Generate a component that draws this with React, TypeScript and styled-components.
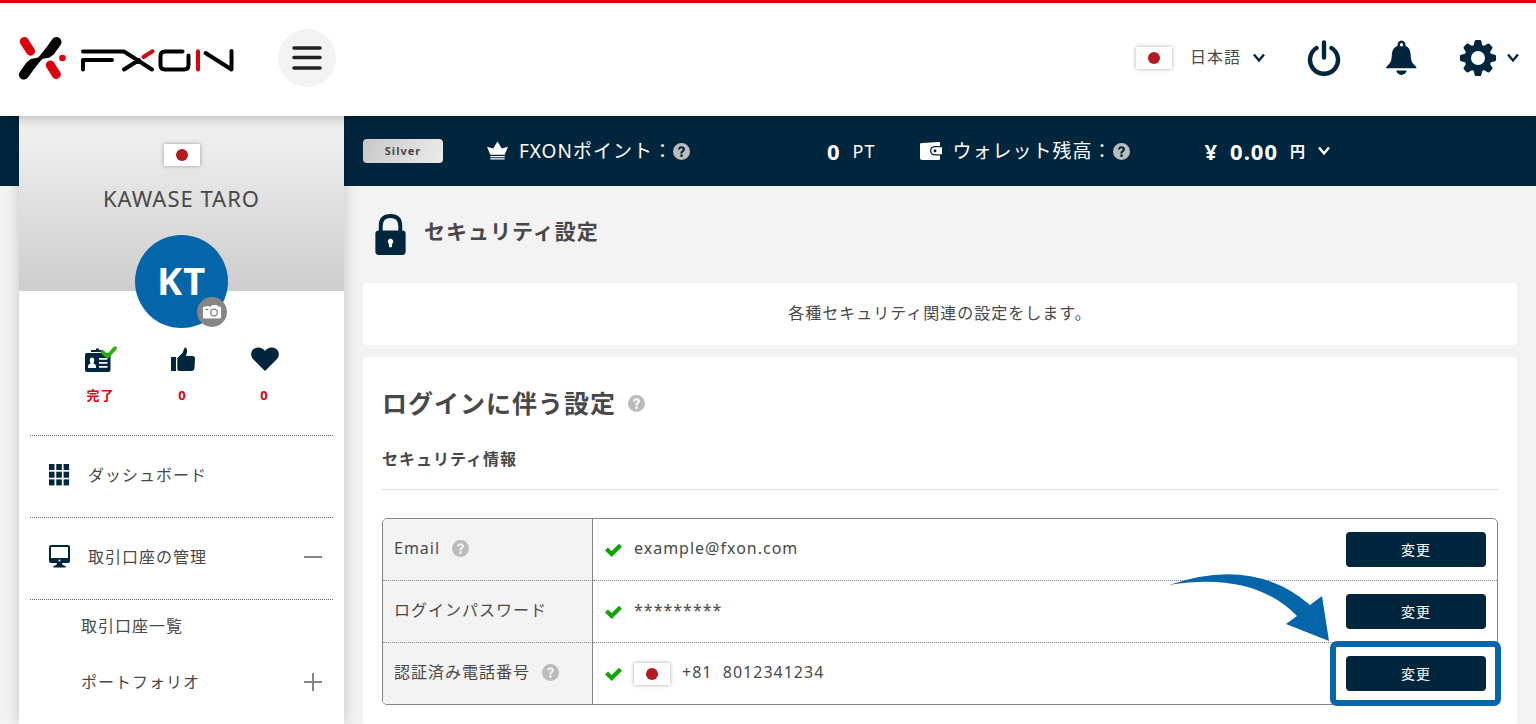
import React from "react";
import styled, { createGlobalStyle, css } from "styled-components";

const navy = "#00263e";
const red = "#dc000f";
const blue = "#0565a9";
const green = "#0ca500";

const GlobalStyle = createGlobalStyle`
  *, *::before, *::after { box-sizing: border-box; }
  body {
    margin: 0;
    background: #f3f3f3;
    color: #484848;
    font: 16px/24px "Noto Sans", "Noto Sans CJK JP", sans-serif;
    letter-spacing: 1px;
  }
  button { font: inherit; letter-spacing: inherit; color: inherit; background: none; border: 0; padding: 0; cursor: pointer; }
  a { color: inherit; text-decoration: none; }
  h1, h2, h3, p, ul { margin: 0; padding: 0; list-style: none; }
  svg { display: block; flex: none; }
`;

const Page = styled.div`
  min-height: 100vh;
  overflow-x: hidden;
`;

const Header = styled.header`
  position: relative;
  z-index: 2;
  display: flex;
  align-items: center;
  height: 116px;
  padding: 0 17px 4px 18px;
  border-top: 3px solid ${red};
  background: #fff;
  box-shadow: 0 2px 12px rgba(0, 0, 0, 0.25);
`;

const MenuButton = styled.button`
  display: grid;
  place-items: center;
  width: 58px;
  height: 58px;
  margin-left: 43px;
  border-radius: 50%;
  background: #f3f3f3;
`;

const HeaderActions = styled.div`
  display: flex;
  align-items: center;
  margin-left: auto;
`;

const HeaderButton = styled.button<{ $before?: number; $gap?: number }>`
  display: flex;
  align-items: center;
  gap: ${(p) => p.$gap ?? 0}px;
  margin-left: ${(p) => p.$before ?? 0}px;
  color: ${navy};
`;

const LanguageName = styled.span`
  margin-left: 6px;
  padding-bottom: 2px;
  color: #484848;
`;

const FlagBox = styled.span`
  display: grid;
  place-items: center;
  flex: none;
  width: 36px;
  height: 22px;
  background: #fff;
  box-shadow: 0 0 4px rgba(0, 0, 0, 0.35);

  &::after {
    content: "";
    width: 12px;
    height: 12px;
    border-radius: 50%;
    background: #b31b22;
  }
`;

const Body = styled.div`
  display: flex;
  min-height: calc(100vh - 116px);
  padding-left: 19px;
  background: linear-gradient(${navy} 70px, #f3f3f3 70px);
`;

const Sidebar = styled.aside`
  flex: none;
  width: 325px;
  background: #fff;
  box-shadow: 0 0 14px rgba(0, 0, 0, 0.2);
`;

const Profile = styled.div`
  display: flex;
  flex-direction: column;
  align-items: center;
  height: 175px;
  padding-top: 28px;
  background: linear-gradient(#f3f3f3, #cdcdcd);
`;

const UserName = styled.p`
  margin-top: 16px;
  font-size: 22px;
  line-height: 32px;
`;

const Avatar = styled.div`
  position: relative;
  flex: none;
  display: grid;
  place-items: center;
  width: 93px;
  height: 93px;
  margin-top: 21px;
  border-radius: 50%;
  background: ${blue};
  color: #fff;
  font-size: 38px;
  line-height: 48px;
  font-weight: 700;
  padding-bottom: 4px;
`;

const CameraButton = styled.button`
  position: absolute;
  right: 1px;
  bottom: 1px;
  display: grid;
  place-items: center;
  width: 30px;
  height: 30px;
  border-radius: 50%;
  background: #868686;
`;

const Stats = styled.ul`
  display: flex;
  justify-content: center;
  padding: 55px 0 30px 2px;
`;

const Stat = styled.li`
  display: flex;
  flex-direction: column;
  align-items: center;
  gap: 12px;
  width: 82px;
  color: ${red};
  font-size: 13px;
  line-height: 20px;
  font-weight: 700;
`;

const dotted = css`
  border-top: 1px dotted #666;
`;

const Nav = styled.nav`
  padding: 0 11px;
`;

const NavItem = styled.a`
  ${dotted}
  display: flex;
  align-items: center;
  gap: 18px;
  height: 82px;
  padding: 0 11px 4px 19px;

  & > svg:last-child:not(:first-child) { margin-left: auto; }
`;

const SubNav = styled.div`
  ${dotted}
`;

const SubItem = styled.a`
  display: flex;
  align-items: center;
  justify-content: space-between;
  height: 56px;
  padding: 0 11px 4px 51px;
`;

const Main = styled.main`
  display: flex;
  flex-direction: column;
  flex: 1;
  min-width: 0;
`;

const StatusBar = styled.div`
  display: flex;
  align-items: center;
  height: 70px;
  padding: 0 19px;
  color: #fff;
  font-size: 19px;
  line-height: 28px;
`;

const Rank = styled.span`
  width: 80px;
  margin-right: 44px;
  border-radius: 4px;
  background: linear-gradient(120deg, #c8c8c8, #ececec);
  color: #484848;
  font-size: 11px;
  line-height: 24px;
  font-weight: 700;
  text-align: center;
`;

const Metric = styled.div<{ $width: number }>`
  display: flex;
  align-items: center;
  width: ${(p) => p.$width}px;
  white-space: nowrap;

  & > svg { margin-right: 11px; }
`;

const Amount = styled.div`
  display: flex;
  align-items: center;
  justify-content: flex-end;
  gap: 12px;
  margin-right: 44px;
  font-size: 18px;

  strong { font-size: 22px; }
  b { font-size: 15px; }
`;

const HelpButton = styled.button`
  display: inline-flex;
  align-items: center;
  color: #bbb;
`;

const TitleRow = styled.div`
  display: flex;
  align-items: center;
  gap: 18px;
  height: 97px;
  padding-left: 31px;
`;

const PageTitle = styled.h1`
  padding-bottom: 8px;
  font-size: 21px;
  line-height: 32px;
`;

const Panel = styled.section<{ $grow?: boolean }>`
  flex: ${(p) => (p.$grow ? "1" : "none")};
  margin: 0 19px ${(p) => (p.$grow ? 0 : 12)}px;
  padding: 0 19px;
  border-radius: 4px;
  background: #fff;
`;

const Intro = styled.p`
  padding: 18px 0 20px;
  text-align: center;
`;

const SectionTitle = styled.h2`
  display: flex;
  align-items: center;
  gap: 12px;
  padding: 28px 0 20px;
  font-size: 25px;
  line-height: 36px;
`;

const SubTitle = styled.h3`
  padding: 6px 0 18px;
  border-bottom: 1px solid #ddd;
  font-size: 16px;
  line-height: 24px;
`;

const TableFrame = styled.div`
  margin: 28px 0 18px;
  border: 1px solid #868686;
  border-radius: 5px;
`;

const Table = styled.table`
  width: 100%;
  border-collapse: separate;
  border-spacing: 0;

  tr + tr > * { height: 62px; border-top: 1px dotted #888; }
  th, td { height: 61px; padding: 0; }
  th {
    width: 210px;
    padding: 0 11px 3px;
    border-right: 1px solid #868686;
    background: #f3f3f3;
    font-weight: 400;
    text-align: left;
  }
  tr:first-child th { border-top-left-radius: 4px; }
  tr:last-child th { border-bottom-left-radius: 4px; }
`;

const Label = styled.span`
  display: flex;
  align-items: center;
  gap: 12px;
`;

const Value = styled.div`
  display: flex;
  align-items: center;
  gap: 12px;
  padding: 0 11px 0 12px;
`;

const Text = styled.span`
  padding-bottom: 3px;
  white-space: pre;
`;

const Action = styled.div`
  position: relative;
  margin-left: auto;
`;

const ChangeButton = styled.button`
  display: block;
  width: 140px;
  height: 35px;
  border-radius: 4px;
  background: ${navy};
  color: #fff;
  font-size: 14px;
  line-height: 20px;
`;

const Highlight = styled.span`
  position: absolute;
  inset: -15px -15px -15px -16px;
  border: 6px solid ${blue};
  border-radius: 7px;
  pointer-events: none;
`;

const Pointer = styled.svg`
  position: absolute;
  right: 157px;
  bottom: 49px;
  pointer-events: none;
`;

const Logo = () => (
  <svg width="217" height="44" viewBox="18 36 217 44" role="img" aria-label="FXON">
    <g fill="none" strokeLinecap="round" strokeLinejoin="round">
      <path d="M24.300 41.500L30.500 51.200M50.300 65L56.300 74.500" stroke={red} strokeWidth="9" />
      <path d="M56.500 42L50 51M23.900 74.600L30.400 65.600" stroke="#000" strokeWidth="10" />
      <path d="M46 48L40 55.500Q38.500 58 35 58.300H46Q49 58 50.500 57L54.500 52ZM34.400 68.600L40.400 61.100Q41.900 58.600 45.400 58.300H34.400Q31.400 58.600 29.900 59.600L25.900 64.600Z" fill="#000" />
      <circle cx="62.500" cy="58" r="3.300" fill={red} />
      <g stroke="#000" strokeWidth="4">
        <path d="M83 51.500H124L152 69.500M83 69.500V60H112M124 69.500L139 60M182.500 51.500H165Q160.500 51.500 160.500 56V65Q160.500 69.500 165 69.500H184Q188.500 69.500 188.500 65V55.500M205.500 53L231.500 69.500V51" />
      </g>
      <path d="M143.500 57L152.500 51.300M198 51.300V69.500" stroke={red} strokeWidth="4" />
    </g>
  </svg>
);

const Chevron = () => (
  <svg width="12" height="10" viewBox="0 0 12 10" fill="none" stroke="currentColor" strokeWidth="2.400">
    <path d="M1 1.500L6 7.500L11 1.500" />
  </svg>
);

const Help = () => (
  <HelpButton aria-label="ヘルプ">
    <svg width="17" height="17" viewBox="0 0 16 16" fill="currentColor">
      <path d="M16 8A8 8 0 1 1 0 8a8 8 0 0 1 16 0M4.700 6.200h2c.05-.85.45-1.300 1.250-1.300.75 0 1.200.4 1.200 1 0 .5-.25.85-.9 1.300C7.300 7.800 7 8.200 7 9.200v.6h2v-.4c0-.5.2-.75.85-1.200.9-.6 1.400-1.250 1.400-2.250C11.250 4.300 9.900 3.100 8 3.100 6 3.100 4.750 4.300 4.700 6.200M8 13.100a1.200 1.200 0 1 0 0-2.400 1.200 1.200 0 0 0 0 2.400" fillRule="evenodd" />
    </svg>
  </HelpButton>
);

const Check = () => (
  <svg width="17" height="14" viewBox="0 0 17 14" fill="none" stroke={green} strokeWidth="4.200">
    <path d="M1.500 6L6.700 11L15.500 2.300" />
  </svg>
);

const PowerIcon = () => (
  <svg width="34" height="36" viewBox="0 0 34 36" fill="none" stroke={navy} strokeWidth="4.400" strokeLinecap="round">
    <path d="M9.500 8A14 14 0 1 0 24.500 8M17 2.500V17.500" />
  </svg>
);

const BellIcon = () => (
  <svg width="31" height="36" viewBox="0 0 32 36" fill={navy}>
    <path fillRule="evenodd" d="M16 0A4.200 4.200 0 0 0 12 5.400C8 7 6.200 10.500 6 15C5.700 20.500 5 23 1.500 26Q0 27 0 28.500H31.500Q31.500 27 30 26C26.500 23 25.800 20.500 25.500 15C25.200 10.500 24 7 20 5.400A4.200 4.200 0 0 0 16 0M16 2.600A1.700 1.700 0 1 1 16 6A1.700 1.700 0 1 1 16 2.600M10.500 31H21.500Q20 35.500 16 35.500T10.500 31" />
  </svg>
);

const GearIcon = () => (
  <svg width="36" height="36" viewBox="-18 -18 36 36">
    <g fill={navy}>
      {[0, 45, 90, 135].map((a) => (
        <path key={a} transform={`rotate(${a})`} d="M-4.500 -12L-3.300 -17Q-3 -18 -2 -18H2Q3 -18 3.300 -17L4.500 -12V12L3.300 17Q3 18 2 18H-2Q-3 18 -3.300 17L-4.500 12Z" />
      ))}
      <circle r="13.500" />
    </g>
    <circle r="7" fill="#fff" />
  </svg>
);

const CameraIcon = () => (
  <svg width="18" height="14" viewBox="0 0 18 14">
    <path d="M1.500 1.500H4V1H6V1.500H8L9 0H14L15 1.500H16.500Q18 1.500 18 3V12Q18 13.500 16.500 13.500H1.500Q0 13.500 0 12V3Q0 1.500 1.500 1.500" fill="#fff" />
    <circle cx="11" cy="7.500" r="3.300" fill="none" stroke="#868686" strokeWidth="1.300" />
    <path d="M2 4.500H5.500" stroke="#868686" />
  </svg>
);

const IdIcon = () => (
  <svg width="32" height="27" viewBox="0 0 32 27">
    <rect y="7" width="25.500" height="19" rx="2" fill={navy} />
    <path d="M6 5H18M11 3.500H14" stroke={navy} strokeWidth="2" />
    <path d="M3 22V20Q3 18.300 5.500 17.500Q3.500 11.500 7 11.500T8.500 17.500Q11 18.300 11 20V22ZM14 12H22.500V13.800H14ZM14 16H22.500V17.800H14ZM14 20H22.500V21.800H14Z" fill="#fff" />
    <path d="M17.500 6L22.500 10.500L30 2.200" fill="none" stroke="#2bae0a" strokeWidth="3.800" strokeLinecap="round" />
  </svg>
);

const ThumbIcon = () => (
  <svg width="24" height="27" viewBox="0 0 24 27" fill={navy}>
    <path d="M0 11H5V25H0ZM6.300 24V12L11.500 7L13.500 2Q14.500 1 15.500 2.300Q17 5 14.800 10H21.500Q24 10 24 12.500L23.500 22Q23 25 20.500 25H9Q7 25 6.300 24" />
  </svg>
);

const HeartIcon = () => (
  <svg width="28" height="27" viewBox="0 0 28 27" fill={navy}>
    <path d="M14 25L2 13C-1.500 9 0 2 7 1.500Q11.500 1.300 14 5Q16.500 1.300 21 1.500C28 2 29.500 9 26 13Z" />
  </svg>
);

const GridIcon = () => (
  <svg width="21" height="22" viewBox="0 0 21 22" fill={navy}>
    {[0, 1, 2].flatMap((r) => [0, 1, 2].map((c) => (
      <rect key={`${r}${c}`} x={c * 7.300} y={r * 7.700} width="5.500" height="6" />
    )))}
  </svg>
);

const DesktopIcon = () => (
  <svg width="21" height="23" viewBox="0 0 21 23" fill={navy}>
    <path fillRule="evenodd" d="M2 0H19Q21 0 21 2V16Q21 18 19 18H13Q13 20.300 15 20.500Q17 20.500 16.800 22.500H4.200Q4 20.500 6 20.500Q8 20.300 8 18H2Q0 18 0 16V2Q0 0 2 0M2 2V13H19V2ZM10.500 14.500A1 1 0 1 0 10.500 16.500A1 1 0 1 0 10.500 14.500" />
  </svg>
);

const Sign = ({ plus }: { plus?: boolean }) => (
  <svg width="18" height="18" viewBox="0 0 18 18" stroke="#868686" strokeWidth="2">
    <path d={plus ? "M0 9H18M9 0V18" : "M0 9H18"} />
  </svg>
);

const CrownIcon = () => (
  <svg width="21" height="20" viewBox="0 0 22 20" fill="#fff">
    <path d="M3.500 14L0 5.500L6.500 7.500L11 0L15.500 7.500L22 5.500L18.500 14ZM3.500 15.300H18.500V16.500H3.500ZM3.500 17.500H18.500V19H3.500Z" />
  </svg>
);

const WalletIcon = () => (
  <svg width="22" height="18" viewBox="0 0 22 18">
    <path d="M2 1L19 0Q20 0 20 1V17Q20 18 19 18H2Q0 18 0 16V2Q0 1 2 1" fill="#fff" />
    <path d="M22 4H14.500Q10 4.500 10 8.700T14.500 13.500H22" fill={navy} />
    <path d="M22 5.200H15Q11.300 5.500 11.300 8.700T15 12.200H22Z" fill="#fff" />
    <circle cx="15" cy="8.700" r="1.500" fill={navy} />
  </svg>
);

const LockIcon = () => (
  <svg width="31" height="41" viewBox="0 0 31 42">
    <path d="M5.500 20V12Q5.500 2 15.500 2T25.500 12V20" fill="none" stroke={navy} strokeWidth="4" />
    <rect y="17" width="31" height="25" rx="3.500" fill={navy} />
    <path d="M15.500 25A3.200 3.200 0 0 0 13.700 30.500L14.200 34H16.800L17.300 30.500A3.200 3.200 0 0 0 15.500 25" fill="#fff" />
  </svg>
);

const Arrow = () => (
  <Pointer width="160" height="68" viewBox="0 0 160 68" aria-hidden="true">
    <path d="M0 11Q84 -18 141 31L153 22L160 67L117 50L128 42Q84 -3 0 11" fill={blue} />
  </Pointer>
);

export default function App() {
  return (
    <Page>
      <GlobalStyle />
      <Header>
        <a href="#home"><Logo /></a>
        <MenuButton aria-label="メニュー">
          <svg width="30" height="26" viewBox="0 0 30 26" stroke="#222" strokeWidth="3.500" strokeLinecap="round">
            <path d="M2 3H28M2 12.500H28M2 23H28" />
          </svg>
        </MenuButton>
        <HeaderActions>
          <HeaderButton $gap={12}>
            <FlagBox />
            <LanguageName>日本語</LanguageName>
            <Chevron />
          </HeaderButton>
          <HeaderButton $before={42} aria-label="ログアウト"><PowerIcon /></HeaderButton>
          <HeaderButton $before={45} aria-label="お知らせ"><BellIcon /></HeaderButton>
          <HeaderButton $before={43} $gap={11} aria-label="設定"><GearIcon /><Chevron /></HeaderButton>
        </HeaderActions>
      </Header>
      <Body>
        <Sidebar>
          <Profile>
            <FlagBox />
            <UserName>KAWASE TARO</UserName>
            <Avatar>
              KT
              <CameraButton aria-label="写真を変更"><CameraIcon /></CameraButton>
            </Avatar>
          </Profile>
          <Stats>
            <Stat><IdIcon />完了</Stat>
            <Stat><ThumbIcon />0</Stat>
            <Stat><HeartIcon />0</Stat>
          </Stats>
          <Nav>
            <NavItem href="#dashboard"><GridIcon />ダッシュボード</NavItem>
            <NavItem href="#accounts"><DesktopIcon />取引口座の管理<Sign /></NavItem>
            <SubNav>
              <SubItem href="#list">取引口座一覧</SubItem>
              <SubItem href="#portfolio">ポートフォリオ<Sign plus /></SubItem>
            </SubNav>
          </Nav>
        </Sidebar>
        <Main>
          <StatusBar>
            <Rank>Silver</Rank>
            <Metric $width={340}><CrownIcon />FXONポイント：<Help /></Metric>
            <Amount><strong>0</strong>PT</Amount>
            <Metric $width={285}><WalletIcon />ウォレット残高：<Help /></Metric>
            <Amount><strong>¥</strong><strong>0.00</strong><b>円</b><Chevron /></Amount>
          </StatusBar>
          <TitleRow>
            <LockIcon />
            <PageTitle>セキュリティ設定</PageTitle>
          </TitleRow>
          <Panel>
            <Intro>各種セキュリティ関連の設定をします。</Intro>
          </Panel>
          <Panel $grow>
            <SectionTitle>ログインに伴う設定<Help /></SectionTitle>
            <SubTitle>セキュリティ情報</SubTitle>
            <TableFrame>
              <Table>
                <tbody>
                  <tr>
                    <th scope="row"><Label>Email<Help /></Label></th>
                    <td>
                      <Value>
                        <Check /><Text>example@fxon.com</Text>
                        <Action><ChangeButton>変更</ChangeButton></Action>
                      </Value>
                    </td>
                  </tr>
                  <tr>
                    <th scope="row"><Label>ログインパスワード</Label></th>
                    <td>
                      <Value>
                        <Check /><Text>*********</Text>
                        <Action><ChangeButton>変更</ChangeButton></Action>
                      </Value>
                    </td>
                  </tr>
                  <tr>
                    <th scope="row"><Label>認証済み電話番号<Help /></Label></th>
                    <td>
                      <Value>
                        <Check /><FlagBox /><Text>+81  8012341234</Text>
                        <Action>
                          <ChangeButton>変更</ChangeButton>
                          <Highlight />
                          <Arrow />
                        </Action>
                      </Value>
                    </td>
                  </tr>
                </tbody>
              </Table>
            </TableFrame>
          </Panel>
        </Main>
      </Body>
    </Page>
  );
}
